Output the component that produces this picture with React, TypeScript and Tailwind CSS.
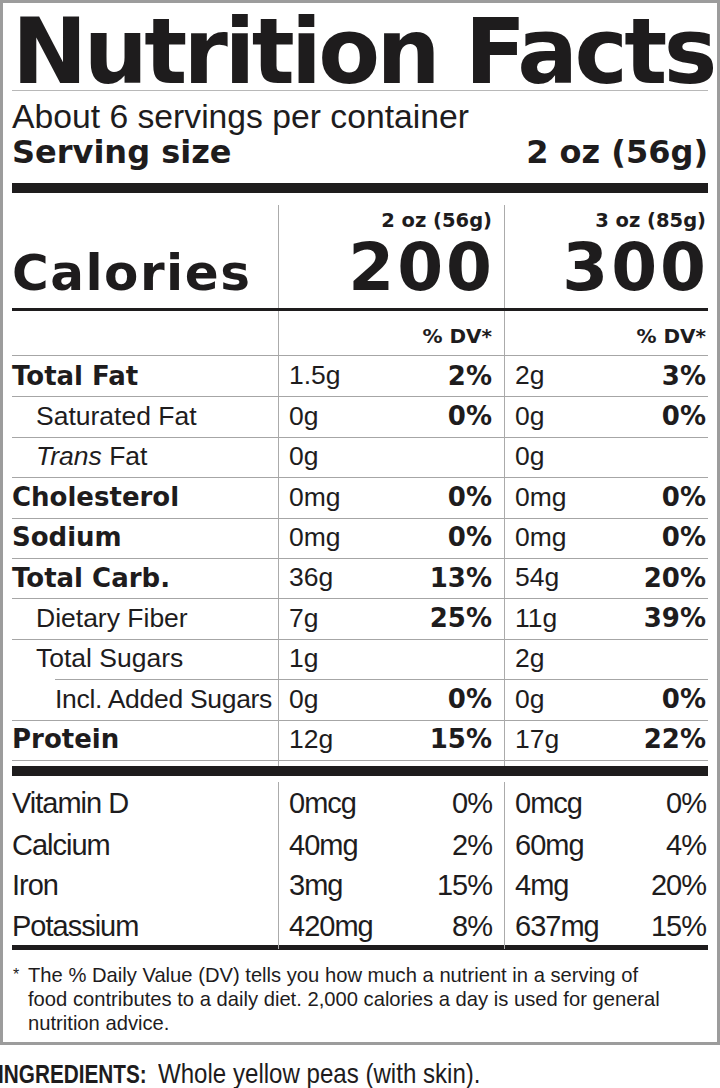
import React from 'react';

const heavy = "font-['DejaVu_Sans',sans-serif] font-bold";
const reg = "font-['Liberation_Sans',Arial,sans-serif]";

type Row = {
  label: React.ReactNode;
  bold?: boolean;
  pad: string;
  a: string;
  ap: string;
  b: string;
  bp: string;
  h: string;
  line?: string;
};

const nutrients: Row[] = [
  { label: 'Total Fat', bold: true, pad: 'pl-0', a: '1.5g', ap: '2%', b: '2g', bp: '3%', h: 'h-[41px]' },
  { label: 'Saturated Fat', pad: 'pl-[24px]', a: '0g', ap: '0%', b: '0g', bp: '0%', h: 'h-[40px]' },
  {
    label: (
      <span>
        <i>Trans</i> Fat
      </span>
    ),
    pad: 'pl-[24px]',
    a: '0g',
    ap: '',
    b: '0g',
    bp: '',
    h: 'h-[41px]',
  },
  { label: 'Cholesterol', bold: true, pad: 'pl-0', a: '0mg', ap: '0%', b: '0mg', bp: '0%', h: 'h-[40px]' },
  { label: 'Sodium', bold: true, pad: 'pl-0', a: '0mg', ap: '0%', b: '0mg', bp: '0%', h: 'h-[40px]' },
  { label: 'Total Carb.', bold: true, pad: 'pl-0', a: '36g', ap: '13%', b: '54g', bp: '20%', h: 'h-[41px]' },
  { label: 'Dietary Fiber', pad: 'pl-[24px]', a: '7g', ap: '25%', b: '11g', bp: '39%', h: 'h-[40px]' },
  { label: 'Total Sugars', pad: 'pl-[24px]', a: '1g', ap: '', b: '2g', bp: '', h: 'h-[41px]', line: 'ml-[43px]' },
  { label: 'Incl. Added Sugars', pad: 'pl-[43px] tracking-[-0.3px]', a: '0g', ap: '0%', b: '0g', bp: '0%', h: 'h-[40px]' },
  { label: 'Protein', bold: true, pad: 'pl-0', a: '12g', ap: '15%', b: '17g', bp: '22%', h: 'h-[40px]' },
];

const minerals = [
  { label: 'Vitamin D', a: '0mcg', ap: '0%', b: '0mcg', bp: '0%', h: 'h-[48px] pt-[6px]', line: true },
  { label: 'Calcium', a: '40mg', ap: '2%', b: '60mg', bp: '4%', h: 'h-[40px]', line: true },
  { label: 'Iron', a: '3mg', ap: '15%', b: '4mg', bp: '20%', h: 'h-[41px]', line: true },
  { label: 'Potassium', a: '420mg', ap: '8%', b: '637mg', bp: '15%', h: 'h-[40px]', line: false },
];

const cols = 'grid grid-cols-[266px_226px_204px]';
const vline = 'border-l border-[#ababab]';

function NutrientRow({ r }: { r: Row }) {
  return (
    <div className={`flex flex-col ${r.h}`}>
      <div className={`${cols} flex-1`}>
        <div
          className={`flex items-center ${r.pad} ${
            r.bold ? `${heavy} text-[26px]` : `${reg} text-[26.5px]`
          }`}
        >
          {r.label}
        </div>
        <div className={`${vline} flex items-center justify-between pl-[10px] pr-[12px]`}>
          <span className={`${reg} text-[26.5px]`}>{r.a}</span>
          <span className={`${heavy} text-[26px]`}>{r.ap}</span>
        </div>
        <div className={`${vline} flex items-center justify-between pl-[10px] pr-[2px]`}>
          <span className={`${reg} text-[26.5px]`}>{r.b}</span>
          <span className={`${heavy} text-[26px]`}>{r.bp}</span>
        </div>
      </div>
      <div className={`h-px bg-[#a6a6a6] ${r.line ?? ''}`} />
    </div>
  );
}

export default function App() {
  return (
    <div className="w-[720px] min-h-[1088px] bg-white text-[#1e1c1d] overflow-hidden">
      <div className="border-[3px] border-[#9c9c9c] px-[9px]">
        {/* Title */}
        <div className="h-[88px] pt-[11px] border-b border-[#b8b8b8]">
          <h1 className={`${heavy} text-[90px] leading-[76px] tracking-[-3.6px] whitespace-nowrap`}>
            Nutrition Facts
          </h1>
        </div>

        {/* Servings */}
        <div className="pt-[7px]">
          <p className={`${reg} text-[33.7px] leading-[36px]`}>About 6 servings per container</p>
          <div className={`${heavy} text-[32px] leading-[36px] flex justify-between`}>
            <span>Serving size</span>
            <span>2 oz (56g)</span>
          </div>
        </div>
        <div className="mt-[13px] h-[10px] bg-[#1e1c1d]" />

        {/* Calories */}
        <div className={`${cols} mt-[12px] h-[103px]`}>
          <div className="flex items-end pb-[10px]">
            <span className={`${heavy} text-[50px] leading-[50px] tracking-[1.5px]`}>Calories</span>
          </div>
          <div className={`${vline} flex flex-col items-end pt-[4px] pr-[12px]`}>
            <span className={`${heavy} text-[19.5px] leading-[24px]`}>2 oz (56g)</span>
            <span className={`${heavy} text-[66px] leading-[64px] mt-[3px] tracking-[3px] -mr-[3px]`}>200</span>
          </div>
          <div className={`${vline} flex flex-col items-end pt-[4px] pr-[2px]`}>
            <span className={`${heavy} text-[19.5px] leading-[24px]`}>3 oz (85g)</span>
            <span className={`${heavy} text-[66px] leading-[64px] mt-[3px] tracking-[3px] -mr-[3px]`}>300</span>
          </div>
        </div>
        <div className="h-[3px] bg-[#1e1c1d]" />

        {/* % DV header */}
        <div className={`${cols} h-[45px] border-b border-[#a6a6a6]`}>
          <div />
          <div className={`${vline} flex items-end justify-end pb-[9px] pr-[12px]`}>
            <span className={`${heavy} text-[20px] leading-[20px]`}>% DV*</span>
          </div>
          <div className={`${vline} flex items-end justify-end pb-[9px] pr-[2px]`}>
            <span className={`${heavy} text-[20px] leading-[20px]`}>% DV*</span>
          </div>
        </div>

        {nutrients.map((r, i) => (
          <NutrientRow key={i} r={r} />
        ))}

        <div className={`${cols} h-[6px]`}>
          <div />
          <div className={vline} />
          <div className={vline} />
        </div>
        <div className="h-[10px] bg-[#1e1c1d]" />

        {/* Vitamins & minerals */}
        {minerals.map((m) => (
          <div key={m.label} className={`flex flex-col ${m.h}`}>
            <div className={`${cols} flex-1 ${reg} text-[29px] tracking-[-1px]`}>
              <div className="flex items-center">{m.label}</div>
              <div className={`${vline} flex items-center justify-between pl-[10px] pr-[12px]`}>
                <span>{m.a}</span>
                <span>{m.ap}</span>
              </div>
              <div className={`${vline} flex items-center justify-between pl-[10px] pr-[2px]`}>
                <span>{m.b}</span>
                <span>{m.bp}</span>
              </div>
            </div>
            {m.line && <div className="h-px bg-[#a6a6a6]" />}
          </div>
        ))}
        <div className="h-[5px] bg-[#1e1c1d]" />

        {/* Footnote */}
        <div className={`flex pt-[13px] pb-[7px] pl-[1px] ${reg} text-[20.2px] leading-[24px]`}>
          <span className="w-[15px] shrink-0 text-[16px]">*</span>
          <p>
            The % Daily Value (DV) tells you how much a nutrient in a serving of
            <br />
            food contributes to a daily diet. 2,000 calories a day is used for general
            <br />
            nutrition advice.
          </p>
        </div>
      </div>

      {/* Ingredients */}
      <div className={`mt-[13px] -ml-[2px] flex items-baseline whitespace-nowrap ${reg} leading-[32px]`}>
        <span className="inline-block origin-left scale-x-[0.83] font-bold text-[25px]">INGREDIENTS:</span>
        <span className="inline-block origin-left scale-x-[0.86] -ml-[19px] text-[28px]">
          Whole yellow peas (with skin).
        </span>
      </div>
    </div>
  );
}
